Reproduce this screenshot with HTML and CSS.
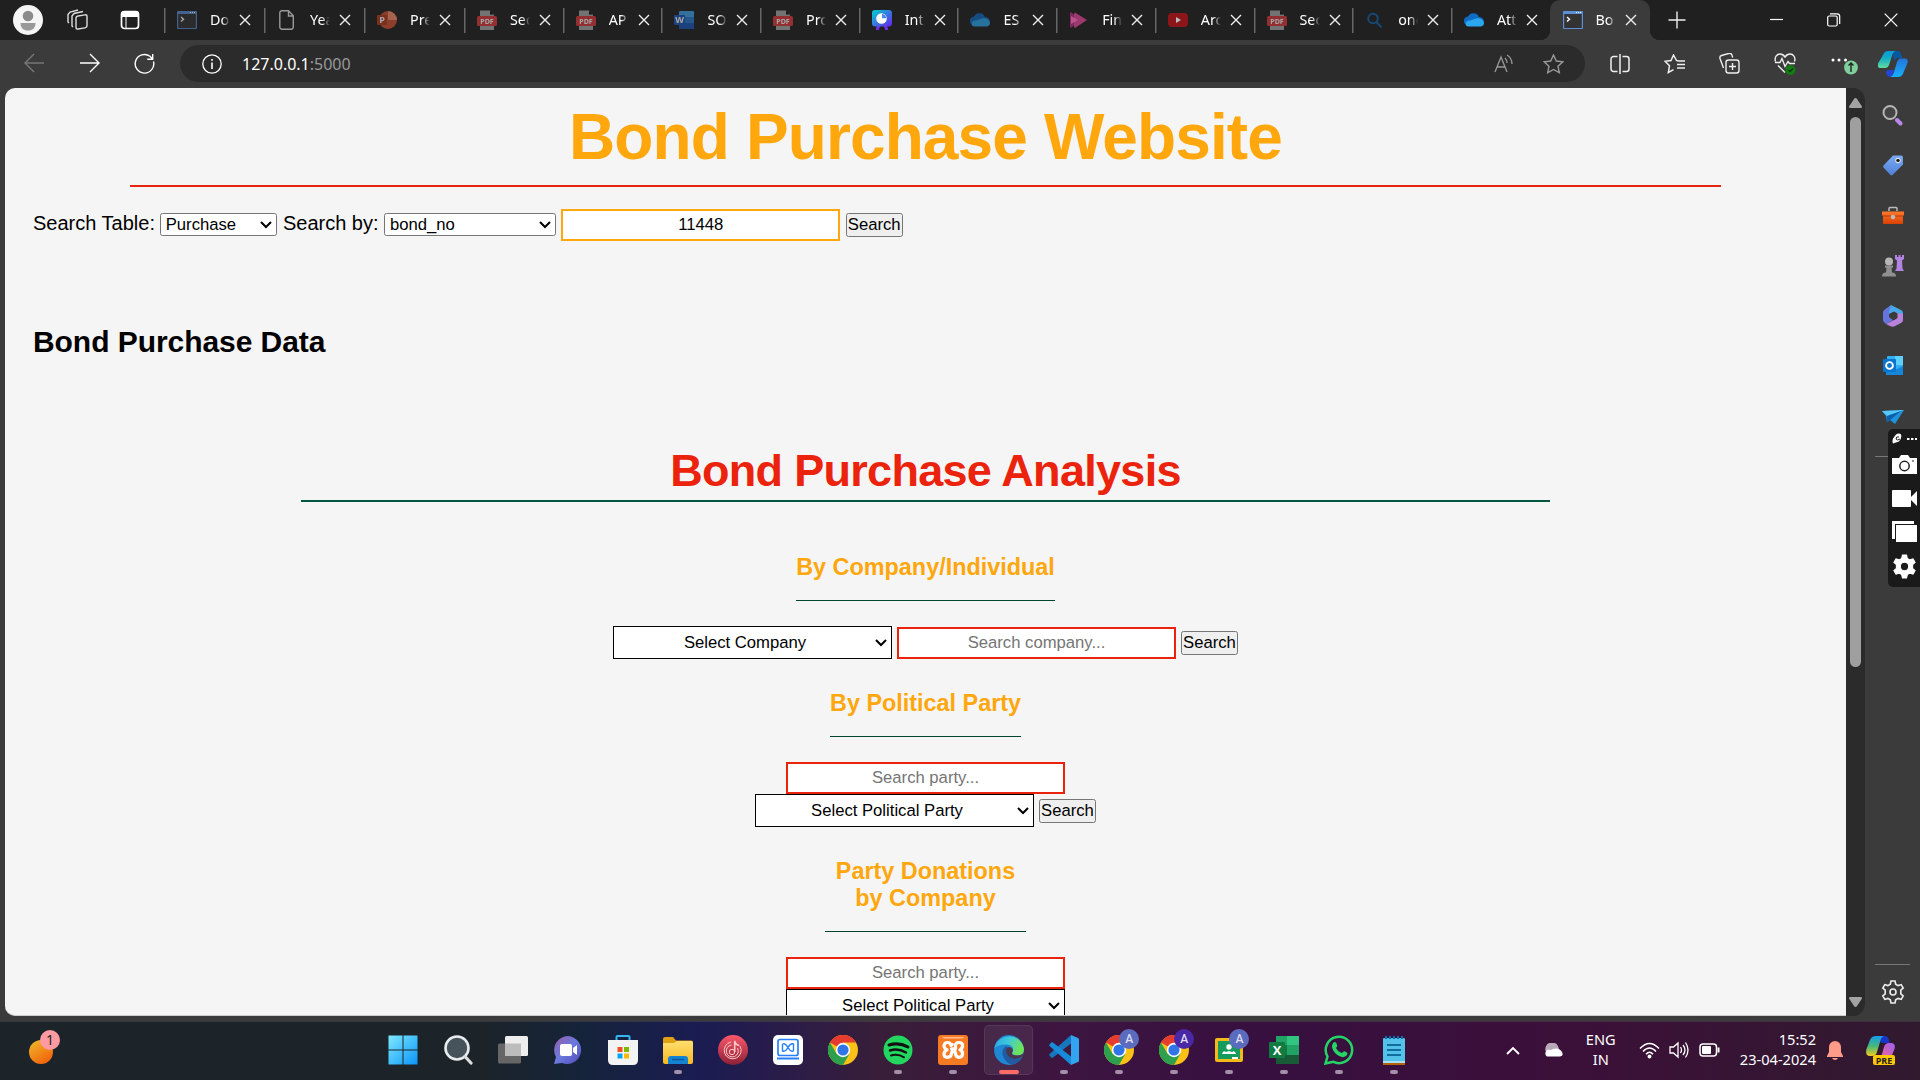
FILE: index.html
```html
<!DOCTYPE html>
<html lang="en">
<head>
<meta charset="utf-8">
<title>Bond Purchase Website</title>
<link rel="stylesheet" href="styles.css">
</head>
<body>
<svg class="defs" width="0" height="0">
  <defs>
    <linearGradient id="gWin" x1="0" y1="0" x2="1" y2="1"><stop offset="0" stop-color="#7feaff"/><stop offset="1" stop-color="#0a94f7"/></linearGradient>
    <linearGradient id="gOrange" x1="0" y1="0" x2=".6" y2="1"><stop offset="0" stop-color="#eebc2d"/><stop offset="1" stop-color="#f2650c"/></linearGradient>
    <linearGradient id="gChat" x1="0" y1="0" x2="1" y2="1"><stop offset="0" stop-color="#9a5ba8"/><stop offset=".5" stop-color="#6a7ade"/><stop offset="1" stop-color="#5046b8"/></linearGradient>
    <linearGradient id="gFolder" x1="0" y1="0" x2="0" y2="1"><stop offset="0" stop-color="#ffdf70"/><stop offset="1" stop-color="#f8b820"/></linearGradient>
    <linearGradient id="gMusic" x1="0" y1="0" x2="0" y2="1"><stop offset="0" stop-color="#fa586a"/><stop offset="1" stop-color="#8c2036"/></linearGradient>
    <linearGradient id="gEdge" x1="0" y1="0" x2="1" y2=".3"><stop offset="0" stop-color="#1a9de0"/><stop offset=".5" stop-color="#30c6d8"/><stop offset="1" stop-color="#65e14c"/></linearGradient>
    <linearGradient id="gCopA" x1="0" y1="0" x2="0" y2="1"><stop offset="0" stop-color="#0b9bd8"/><stop offset=".4" stop-color="#12aac8"/><stop offset="1" stop-color="#62dc9c"/></linearGradient>
    <linearGradient id="gCopB" x1="0" y1="0" x2="0" y2="1"><stop offset="0" stop-color="#2573dc"/><stop offset="1" stop-color="#14b0fa"/></linearGradient>
    <linearGradient id="gPreA" x1="0" y1="0" x2="0" y2="1"><stop offset="0" stop-color="#179cf0"/><stop offset=".5" stop-color="#45b878"/><stop offset="1" stop-color="#f2cc20"/></linearGradient>
    <linearGradient id="gPreB" x1="1" y1="0" x2="0" y2="1"><stop offset="0" stop-color="#9c60f0"/><stop offset="1" stop-color="#fa6590"/></linearGradient>
    <linearGradient id="gPres" x1="0" y1="0" x2="1" y2="1"><stop offset="0" stop-color="#00d3cf"/><stop offset="1" stop-color="#6b20f0"/></linearGradient>
    <linearGradient id="gTag" x1="0" y1="0" x2="0" y2="1"><stop offset="0" stop-color="#79abf2"/><stop offset="1" stop-color="#5080d8"/></linearGradient>
    <linearGradient id="gBox" x1="0" y1="0" x2="0" y2="1"><stop offset="0" stop-color="#ff7a2c"/><stop offset="1" stop-color="#d84004"/></linearGradient>
    <symbol id="close" viewBox="0 0 12 12"><path d="M1 1l10 10M11 1L1 11" stroke="#eee" stroke-width="1.4" fill="none"/></symbol>
    <symbol id="term" viewBox="0 0 20 20"><rect width="20" height="18" y="1" rx="1" fill="#5d8fd6"/><rect x="1.2" y="4" width="17.6" height="14" fill="#333"/><path d="M4 7l2.5 2.3L4 11.500" stroke="#fff" stroke-width="1.4" fill="none"/><path d="M13 2.500h1M15 2.500h1M17 2.500h1" stroke="#fff"/></symbol>
    <symbol id="pdf" viewBox="0 0 20 20"><path d="M3 .5h10l4 4V20H3z" fill="#aaa"/><path d="M13 .5l4 4h-4z" fill="#111"/><rect x="0" y="6" width="20" height="10" rx="1.500" fill="#e03a3c"/><text x="10" y="13.600" font-size="7" font-weight="700" text-anchor="middle" fill="#fff" font-family="Open Sans, sans-serif">PDF</text></symbol>
    <symbol id="cloud" viewBox="0 0 20 20"><path d="M1 14a4.500 4.500 0 0 1 3-7.500A6 6 0 0 1 15 7a4.500 4.500 0 0 1 4 7z" fill="#0f6cc4"/><path d="M2 15.500C.5 13 3 10 6 10.500l6-2c4-1 8 1.500 8 4.500a3.500 3.500 0 0 1-3 3.500H5a4 4 0 0 1-3-1z" fill="#2ba7f0"/></symbol>
    <symbol id="chrome" viewBox="0 0 30 30"><circle cx="15" cy="15" r="15" fill="#fbc116"/><path d="M15 15L2 7.500A15 15 0 0 1 28 7.500H15z" fill="#e63c30"/><path d="M2 7.500A15 15 0 0 0 15 30l6.500-11.300L15 15 8.500 18.700z" fill="#2ca04c"/><circle cx="15" cy="15" r="7.200" fill="#fff"/><circle cx="15" cy="15" r="5.600" fill="#2f75e8"/></symbol>
    <symbol id="gear" viewBox="0 0 24 24"><path d="M10 1h4l.7 3.200 2.400 1.400 3.100-1 2 3.500-2.400 2.100v3.600l2.400 2.100-2 3.500-3.100-1-2.400 1.400L14 23h-4l-.7-3.200-2.400-1.400-3.100 1-2-3.500 2.400-2.100v-3.600L1.800 8.100l2-3.500 3.100 1 2.400-1.400z"/></symbol>
  </defs>
</svg>

<div class="desktop">
  <header class="tabstrip">
    <div class="strip-tools">
      <svg class="avatar" width="30" height="30" viewBox="0 0 30 30"><circle cx="15" cy="15" r="15" fill="#f5f5f5"/><circle cx="15" cy="11" r="5.300" fill="#8b8b8b"/><path d="M7.500 18h15c0 5-3 7.500-7.500 7.500S7.500 23 7.500 18z" fill="#999"/></svg>
      <svg width="22" height="22" viewBox="0 0 22 22" fill="none" stroke="#ddd" stroke-width="1.400"><rect x="9" y="7" width="11" height="13" rx="2" transform="skewY(-10) translate(0 2)"/><path d="M6 18L5 17V7l2-2.500 9-2M2 14l-1-1V5.500L3 3l8-2"/></svg>
      <svg width="20" height="20" viewBox="0 0 20 20"><rect x="1.500" y="1.500" width="17" height="17" rx="3" fill="none" stroke="#fff" stroke-width="1.700"/><path d="M1 4a3 3 0 0 1 3-3h12a3 3 0 0 1 3 3v3H1z" fill="#fff"/><path d="M6 7v11" stroke="#fff"/></svg>
    </div>
    <nav class="tabs">
      <div class="tab wide dim"><svg><use href="#term"/></svg><span>Do</span><svg class="x"><use href="#close"/></svg></div>
      <div class="tab wide"><svg viewBox="0 0 20 20"><path d="M4.500.7h7l4.800 5V17a2.200 2.200 0 0 1-2.200 2.200H5A2.200 2.200 0 0 1 2.800 17V2.800A2 2 0 0 1 4.500.7zM11.500.7V6h4.800" fill="none" stroke="#999" stroke-width="1.400"/></svg><span>Yea</span><svg class="x"><use href="#close"/></svg></div>
      <div class="tab wide dim"><svg viewBox="0 0 20 20"><circle cx="11" cy="10" r="9" fill="#d35230"/><path d="M11 1a9 9 0 0 1 9 9h-9z" fill="#ff8f6b"/><rect y="5" width="10" height="10" rx="1" fill="#b83b1d"/><text x="5" y="13" font-size="9" font-weight="700" text-anchor="middle" fill="#fff" font-family="Open Sans">P</text></svg><span>Pre</span><svg class="x"><use href="#close"/></svg></div>
      <div class="tab dim"><svg><use href="#pdf"/></svg><span>Sec</span><svg class="x"><use href="#close"/></svg></div>
      <div class="tab dim"><svg><use href="#pdf"/></svg><span>AP</span><svg class="x"><use href="#close"/></svg></div>
      <div class="tab dim"><svg viewBox="0 0 20 20"><rect x="5" y="1" width="15" height="18" rx="1" fill="#41a5ee"/><path d="M5 7h15v12H5z" fill="#2b7cd3"/><path d="M5 13h15v6H5z" fill="#185abd"/><rect y="5" width="11" height="10" rx="1" fill="#185abd"/><text x="5.500" y="13" font-size="9" font-weight="700" text-anchor="middle" fill="#fff" font-family="Open Sans">W</text></svg><span>SO</span><svg class="x"><use href="#close"/></svg></div>
      <div class="tab dim"><svg><use href="#pdf"/></svg><span>Pro</span><svg class="x"><use href="#close"/></svg></div>
      <div class="tab"><svg viewBox="0 0 20 20"><path d="M7 15l-2 5M13 15l2 5" stroke="#7a2cf0" stroke-width="3"/><rect width="20" height="16.500" rx="3" fill="url(#gPres)"/><circle cx="9.500" cy="8.500" r="5.300" fill="#fff"/><path d="M10 8.300V4a4.300 4.300 0 0 1 4.300 4.300z" fill="#4a8af5"/></svg><span>Int</span><svg class="x"><use href="#close"/></svg></div>
      <div class="tab dim"><svg><use href="#cloud"/></svg><span>ES</span><svg class="x"><use href="#close"/></svg></div>
      <div class="tab"><svg viewBox="0 0 20 20"><path d="M2 2l9 8-9 8-1-1V3z" fill="#7f2c5b"/><path d="M6 2.500l12 7.500-12 8-1-1V4z" fill="#9c3a6e"/><path d="M2 6l7 4-7 4z" fill="#b9548a"/></svg><span>Fin</span><svg class="x"><use href="#close"/></svg></div>
      <div class="tab"><svg viewBox="0 0 20 20"><rect y="3" width="20" height="14" rx="4" fill="#8b1518"/><path d="M8 7l5 3-5 3z" fill="#bbb"/></svg><span>Arc</span><svg class="x"><use href="#close"/></svg></div>
      <div class="tab dim"><svg><use href="#pdf"/></svg><span>Sec</span><svg class="x"><use href="#close"/></svg></div>
      <div class="tab"><svg viewBox="0 0 20 20" fill="none" stroke="#164a78" stroke-width="1.900"><circle cx="8" cy="8.500" r="4.800"/><path d="M11.500 12l5 5.500"/></svg><span>one</span><svg class="x"><use href="#close"/></svg></div>
      <div class="tab last"><svg><use href="#cloud"/></svg><span>Att</span><svg class="x"><use href="#close"/></svg></div>
      <div class="tab active"><svg><use href="#term"/></svg><span>Bo</span><svg class="x"><use href="#close"/></svg></div>
    </nav>
    <svg class="newtab" width="18" height="18" viewBox="0 0 18 18"><path d="M9 .5v17M.5 9h17" stroke="#eee" stroke-width="1.400"/></svg>
    <div class="winctl">
      <svg width="14" height="14" viewBox="0 0 14 14"><path d="M0 6.500h13" stroke="#fff" stroke-width="1.200"/></svg>
      <svg width="14" height="14" viewBox="0 0 14 14" fill="none" stroke="#fff" stroke-width="1.200"><rect x=".7" y="3" width="9.500" height="10" rx="1.500"/><path d="M3 .9h7a2.700 2.700 0 0 1 2.700 2.700V11"/></svg>
      <svg width="14" height="14" viewBox="0 0 14 14"><path d="M.7.7l12.600 12.600M13.300.7L.7 13.300" stroke="#fff" stroke-width="1.200"/></svg>
    </div>
  </header>

  <div class="toolbar">
    <div class="nav">
      <svg width="21" height="20" viewBox="0 0 21 20" fill="none" stroke="#777" stroke-width="1.400"><path d="M20 10H1M10 1l-9 9 9 9"/></svg>
      <svg width="21" height="20" viewBox="0 0 21 20" fill="none" stroke="#fff" stroke-width="1.400"><path d="M1 10h19M11 1l9 9-9 9"/></svg>
      <svg width="21" height="21" viewBox="0 0 21 21" fill="none" stroke="#fff" stroke-width="1.400"><path d="M19.500 8.500A9.300 9.300 0 1 1 16 3.300L18.500 6M18.700 1v5.300h-5.500"/></svg>
    </div>
    <div class="address">
      <svg width="20" height="20" viewBox="0 0 20 20" fill="none" stroke="#fff" stroke-width="1.300"><circle cx="10" cy="10" r="9.200"/><path d="M10 8.500v6.500M10 5v1.800" stroke-width="1.600"/></svg>
      <div class="url">127.0.0.1<span>:5000</span></div>
      <svg width="20" height="19" viewBox="0 0 20 19" fill="none" stroke="#999" stroke-width="1.300"><path d="M1 18L7 3l6 15M3 13h8M11 4q2 2 2 5M13 1q5 3 5 9"/></svg>
      <svg width="21" height="20" viewBox="0 0 21 20" fill="none" stroke="#999" stroke-width="1.400"><path d="M10.500 1l2.800 6 6.500.8-4.800 4.400 1.300 6.500-5.800-3.200-5.800 3.200L6 12.200 1.200 7.800l6.500-.8z"/></svg>
    </div>
    <div class="actions">
      <svg width="20" height="20" viewBox="0 0 20 20" fill="none" stroke="#eee" stroke-width="1.500"><path d="M7.500 2.500H3.500A2.500 2.500 0 0 0 1 5v10a2.500 2.500 0 0 0 2.500 2.500h4M12.500 2.500h4A2.500 2.500 0 0 1 19 5v10a2.500 2.500 0 0 1-2.500 2.500h-4M10 0v20"/></svg>
      <svg width="21" height="20" viewBox="0 0 21 20" fill="none" stroke="#eee" stroke-width="1.500"><path d="M14 7l-1.500-.5L9.500 1 7 6.500 1 7.300l4.500 4.500L4.300 18.500l5.200-2.800M13 10.500h8M13 14h8M14 7h7"/></svg>
      <svg width="21" height="21" viewBox="0 0 21 21" fill="none" stroke="#eee" stroke-width="1.400"><rect x="7" y="7" width="13" height="13" rx="2.500"/><path d="M13.500 10v7M10 13.500h7M4.500 15L1 5.500A2.500 2.500 0 0 1 2.500 2.500l7-2A2.500 2.500 0 0 1 13 2.200l.7 2.300"/></svg>
      <svg width="22" height="22" viewBox="0 0 22 22" fill="none" stroke="#eee" stroke-width="1.400"><path d="M1.500 8.500C0 4 3 1 6 1c2.500 0 4 1.500 5 3 1-1.500 2.500-3 5-3 3 0 6 3 4.500 7.500M1 9.500h5l2-4 3 8 3-5 1.500 2H21M4 12.500l7 7"/><circle cx="16.500" cy="17" r="5" fill="#127c12" stroke="none"/><path d="M14.500 17l1.500 1.500 3-3" stroke="#053a05"/></svg>
      <svg width="28" height="24" viewBox="0 0 28 24" fill="#fff"><circle cx="3" cy="8" r="1.500"/><circle cx="9" cy="8" r="1.500"/><circle cx="15.500" cy="8" r="1.500"/><circle cx="21" cy="15.500" r="6.900" fill="#7fce9c"/><path d="M21 20v-9M18.500 13.500l2.500-2.500 2.500 2.500" stroke="#222" stroke-width="1.400" fill="none"/></svg>
      <svg width="30" height="28" viewBox="0 0 30 28"><path d="M14 1h6q2.500 0 3.500 4l.8 3h-4q-3 0-4 3z" fill="#08589e"/><path d="M9 20h7q-1 6-4 7-3-.5-4-4z" fill="#2344db"/><path d="M5 5Q6.500 1 10 1h8q-3 .5-4 5l-3 9q-1 3-4 3H2q-3-.5-2-4.500z" fill="url(#gCopA)"/><path d="M25.500 22.500Q24 27 20 27h-8q3-1 4-5l3-10q1-3.500 4-3.500h4.500q3 .5 2 4.500z" fill="url(#gCopB)"/></svg>
    </div>
  </div>

  <div class="browser-body">
    <main class="page">
      <h1 class="site-title">Bond Purchase Website</h1>
      <form class="search-row top-search">
        <label>Search Table:</label>
        <select class="ctl plain table-select"><option>Purchase</option></select>
        <label>Search by:</label>
        <select class="ctl plain by-select"><option>bond_no</option></select>
        <input class="ctl field orange" value="11448">
        <button class="ctl btn" type="button">Search</button>
      </form>
      <h2 class="data-title">Bond Purchase Data</h2>
      <h2 class="analysis-title">Bond Purchase Analysis</h2>

      <h3 class="section-title company-title">By Company/Individual</h3>
      <form class="search-row">
        <select class="ctl picker"><option>Select Company</option></select>
        <input class="ctl field" placeholder="Search company...">
        <button class="ctl btn" type="button">Search</button>
      </form>

      <h3 class="section-title party-title">By Political Party</h3>
      <form class="search-stack">
        <input class="ctl field" placeholder="Search party...">
        <div class="search-row">
          <select class="ctl picker"><option>Select Political Party</option></select>
          <button class="ctl btn" type="button">Search</button>
        </div>
      </form>

      <h3 class="section-title donations-title">Party Donations<br>by Company</h3>
      <form class="search-stack">
        <input class="ctl field" placeholder="Search party...">
        <select class="ctl picker"><option>Select Political Party</option></select>
      </form>
    </main>
    <div class="scrollbar">
      <svg width="13" height="10" viewBox="0 0 13 10"><path d="M6.500 0Q7.500 0 8 1l5 7.500-.5 1.500H.5L0 8.500 5 1q.5-1 1.500-1z" fill="#a3a3a3"/></svg>
      <div class="thumb"></div>
      <svg width="13" height="10" viewBox="0 0 13 10"><path d="M6.500 10Q5.500 10 5 9L0 1.500.5 0h12l.5 1.500L8 9q-.5 1-1.500 1z" fill="#a3a3a3"/></svg>
    </div>
    <aside class="sidebar">
      <div class="side-icons">
        <svg viewBox="0 0 22 22"><circle cx="8" cy="8.500" r="6.500" fill="#444" stroke="#b5b5b5" stroke-width="2"/><path d="M15 16l3.500 3.500" stroke="#bb86ea" stroke-width="4" stroke-linecap="round"/></svg>
        <svg viewBox="0 0 22 22"><path d="M11 1.500h8q2 0 2 2v7L10.500 21q-1 .8-2 0L1.500 13.500q-.8-1 0-2z" fill="url(#gTag)"/><circle cx="16" cy="6.500" r="2.300" fill="#222" stroke="#fff"/></svg>
        <svg viewBox="0 0 22 22"><path d="M7 6V3.500q0-1 1-1h6q1 0 1 1V6" fill="none" stroke="#bbb" stroke-width="1.500"/><path d="M0 6.500h22V10l-1 1v8H1v-8l-1-1z" fill="url(#gBox)"/><path d="M1 11h20" stroke="#b73804"/><circle cx="11" cy="12" r="2.300" fill="#bbb"/></svg>
        <svg viewBox="0 0 22 22"><path d="M13 0h2v2h1.500V0h2v2H20V0h2v4l-2 1.500.5 8 1.500 2.500h-9l1.500-2.500.5-8L13 4z" fill="#b283e2"/><path d="M3 10.500h8v2l-1.500.5.5 4.500q4 0 4 4H0q0-4 4-4l.5-4.500L3 12.500z" fill="#8f8f8f"/><circle cx="7" cy="6.500" r="4" fill="#b5b5b5"/></svg>
        <svg viewBox="0 0 22 22"><path d="M9 0l10 5q2 1 2 3v4L12 7 7 9 4 4z" fill="#48a8e8"/><path d="M11 .5L5 3Q1 5 1 8v7q0 2 3 4l7-4-4-3V7q0-4 4-6.500z" fill="#6674dd"/><path d="M21 9v6q0 2-2 3l-7 3.500q-2 .5-4-.5l-4-2 10-5 1-6z" fill="#b982dc"/><path d="M8 8.500l4-2 3.500 2v4.500L12 15l-4-2z" fill="#3b3b3b"/></svg>
        <svg viewBox="0 0 22 22"><rect x="5" y="1" width="16" height="19" rx="1" fill="#32aef2"/><path d="M13 1h8v9h-8z" fill="#5ed0ff"/><path d="M4 11l9 4 8-4v9H4z" fill="#1686d9"/><rect x="1" y="4" width="13" height="13" rx="1" fill="#0875d0"/><circle cx="7.500" cy="10.500" r="3.400" fill="none" stroke="#fff" stroke-width="1.900"/></svg>
        <svg viewBox="0 0 22 22"><path d="M0 5l22-1-9 14-5-4-3 2.500L4 10z" fill="#1d92dd"/><path d="M0 5l22-1L5 10z" fill="#56c8fb"/><path d="M5 16.500V10L19 5 8 14z" fill="#0b5fa8"/></svg>
      </div>
      <div class="side-rule upper"></div>
      <div class="side-foot"><div class="side-rule"></div>
        <svg width="24" height="24" viewBox="0 0 24 24" fill="none" stroke="#eee" stroke-width="1.600"><use href="#gear"/><circle cx="12" cy="12" r="3"/></svg>
      </div>
    </aside>
  </div>

  <footer class="taskbar">
    <svg class="weather" width="40" height="44" viewBox="0 0 40 44"><ellipse cx="14" cy="26" rx="12" ry="12" fill="url(#gOrange)"/><circle cx="23" cy="14" r="10" fill="#ff9aa2"/><text x="23" y="19" font-size="14" text-anchor="middle" fill="#222" font-family="Noto Sans, sans-serif">1</text></svg>
    <div class="apps">
      <div class="app"><svg viewBox="0 0 30 30"><path d="M.5.5h14v14H.5zM15.500.5h14v14h-14zM.5 15.500h14v14H.5zM15.500 15.500h14v14h-14z" fill="url(#gWin)"/></svg></div>
      <div class="app"><svg viewBox="0 0 30 30"><circle cx="14" cy="13" r="11.500" fill="#46535b" stroke="#e9ebed" stroke-width="2.600"/><path d="M22 21.500l6 6.500" stroke="#ddd" stroke-width="3.200" stroke-linecap="round"/></svg></div>
      <div class="app"><svg viewBox="0 0 30 30"><rect x="0" y="8.500" width="23" height="20" rx="1.500" fill="#666"/><rect x="7" y="1" width="23" height="20" rx="1.500" fill="#eee"/><path d="M7 8.500h16V21H7z" fill="#bcbcbc"/></svg></div>
      <div class="app"><svg viewBox="0 0 30 30"><path d="M15 1a14 14 0 1 1-6 27l-8 1 2-7A14 14 0 0 1 15 1z" fill="url(#gChat)"/><rect x="7" y="9" width="12" height="12" rx="2" fill="#fff"/><path d="M20 13l4-3v10l-4-3z" fill="#fff"/></svg></div>
      <div class="app"><svg viewBox="0 0 30 30"><path d="M8.500 7V2q0-1 1-1h11q1 0 1 1v5" fill="none" stroke="#35b7ed" stroke-width="2"/><path d="M0 5h30v20q0 5-5 5H5q-5 0-5-5z" fill="#f3f3f3"/><path d="M9.500 12h5v5h-5z" fill="#f25022"/><path d="M16 12h5v5h-5z" fill="#7fba00"/><path d="M9.500 18.500h5v5h-5z" fill="#00a4ef"/><path d="M16 18.500h5v5h-5z" fill="#ffb900"/></svg></div>
      <div class="app open"><svg viewBox="0 0 30 30"><path d="M0 4q0-2 2-2h8l3 3.500h15q2 0 2 2V13H0z" fill="#e0a013"/><path d="M0 8h11l3-2h14q2 0 2 2v19q0 2-2 2H2q-2 0-2-2z" fill="url(#gFolder)"/><path d="M5 29v-5q0-3 3-3h14q3 0 3 3v5z" fill="#1583d1"/><path d="M9 24.500h12" stroke="#0b599c" stroke-width="1.500"/></svg></div>
      <div class="app"><svg viewBox="0 0 30 30"><circle cx="15" cy="15" r="15" fill="url(#gMusic)"/><g fill="none" stroke="#ffc9c9" stroke-width="1"><path d="M22 11a8.500 8.500 0 1 1-9-4"/><path d="M19.500 13a6 6 0 1 1-6-3"/><circle cx="14" cy="17" r="2.700"/><path d="M16.700 17V6q1 4 4.500 4.500" stroke-width="1.600"/></g></svg></div>
      <div class="app"><svg viewBox="0 0 30 30"><rect width="30" height="30" rx="5" fill="#fff"/><rect x="5" y="4.500" width="20" height="16" rx="2" fill="none" stroke="#267fff" stroke-width="1.700"/><path d="M9.500 16V10q0-1.500 1.500-1.300 2 .3 4 3.800t4 3.800q1.500.2 1.500-1.300V9q-3-1-5.500 3.500T9.500 16z" fill="none" stroke="#267fff" stroke-width="1.400"/><path d="M4 23.500h22" stroke="#267fff" stroke-width="2"/></svg></div>
      <div class="app"><svg><use href="#chrome"/></svg></div>
      <div class="app open"><svg viewBox="0 0 30 30"><circle cx="15" cy="15" r="14.500" fill="#22d660"/><g fill="none" stroke="#111" stroke-linecap="round"><path d="M6 10q10-3 19 2" stroke-width="3"/><path d="M7 15.500q8-2.500 16 2" stroke-width="2.500"/><path d="M8 20.500q7-2 13 1.800" stroke-width="2"/></g></svg></div>
      <div class="app open"><svg viewBox="0 0 30 30"><rect width="30" height="30" rx="3" fill="#f77b23"/><path d="M4 2h22q-1 1.500-3 1.500H7Q5 3.500 4 2z" fill="#ffbd91"/><path d="M13 10.500Q12.500 7.500 9.500 7.500T6 10.500q0 3 3 4.300-3 1.500-3 4.500t3.500 3 4-3.500l.5-2.500h3l.5 2.500q.5 3.500 3.500 3.500t3.500-3-2.500-4.500q2.500-1.300 2.500-4.300t-3.500-3-3.500 3v3.300h-4" fill="none" stroke="#fff" stroke-width="3.200" stroke-linejoin="round" stroke-linecap="round"/><circle cx="14" cy="9.500" r="1.800" fill="#fff"/></svg></div>
      <div class="app open current"><svg viewBox="0 0 30 30"><circle cx="15" cy="15" r="14.900" fill="#0f7fd2"/><path d="M.5 13A15 15 0 0 1 30 14q0 6.500-7 6.500c-4 0-6-1.500-4.500-3.500 2-4-1-7.500-6-7.500Q5 9 .5 13z" fill="url(#gEdge)"/><path d="M12 11q-5 4-3 10 2.500 7 9 8.700 7-1.200 10-7.200-6 3-11 .5c-4-2-6-7-3-11z" fill="#114f9e"/><path d="M14.500 12q-3.500 1.500-2 6 2.500 6 9.500 6 4 0 7-3 1.500-1.500 1-.8L30 18q-2.500 2.500-7 2.500c-4 0-6-1.500-4.500-3.500 1.200-3-1-5-4-5z" fill="#3d2740"/></svg></div>
      <div class="app open"><svg viewBox="0 0 30 30"><path d="M22 8.500v13L13.500 15z" fill="#3d1a40"/><path d="M0 19.500L22 0v8.500L4 22.500q-1 .7-2 0z" fill="#1677bf"/><path d="M0 10.500L22 30v-8.500L4 7.500q-1-.7-2 0z" fill="#168bd8"/><path d="M22 0l7 3q1 .5 1 1.500v21q0 1-1 1.500l-7 3z" fill="#33a4ef"/></svg></div>
      <div class="app open"><svg><use href="#chrome"/></svg><i class="badge">A</i></div>
      <div class="app open"><svg><use href="#chrome"/></svg><i class="badge purple">A</i></div>
      <div class="app open"><svg viewBox="0 0 30 30"><rect x="1" y="3" width="28" height="24" rx="2" fill="#f3ba19"/><rect x="4" y="6" width="22" height="18" fill="#159b5b"/><circle cx="15" cy="12" r="2.700" fill="#fff"/><path d="M8 19q1-4 4-2l3-1 3 1q3-2 4 2z" fill="#fff"/><path d="M18 24h6v-2h-6z" fill="#fff"/></svg><i class="badge">A</i></div>
      <div class="app open"><svg viewBox="0 0 30 30"><path d="M7 1h23v28H7z" fill="#21a366"/><path d="M18 1h12v9H18z" fill="#33c481"/><path d="M7 20h23v9H7z" fill="#185c37"/><path d="M7 10h11v10H7z" fill="#107c41"/><rect y="7" width="16" height="16" rx="1" fill="#107c41"/><text x="8" y="19.500" font-size="13" font-weight="700" text-anchor="middle" fill="#fff" font-family="Open Sans">X</text></svg></div>
      <div class="app open"><svg viewBox="0 0 30 30"><path d="M1.500 28.500l2-7A13.200 13.200 0 1 1 9 26.700z" fill="none" stroke="#25d366" stroke-width="2.500"/><path d="M9 8q3-3 4 2 1 1-1 3 2 4 6 5 2-3 4-1 3 1 0 4-4 3-10-2-6-6-3-11z" fill="#25d366"/></svg></div>
      <div class="app open"><svg viewBox="0 0 30 30"><rect x="4" y="3" width="22" height="26" rx="1" fill="#52c2e8"/><path d="M4 26.500h22v1H4z" fill="#fff"/><path d="M4 28h22v2H4z" fill="#b4620d"/><path d="M7 1v3M11 1v3M15 1v3M19 1v3M23 1v3" stroke="#0d6eae" stroke-width="2"/><path d="M8 10h14M8 15h14M8 20h14" stroke="#126c9c" stroke-width="1.800"/></svg></div>
    </div>
    <div class="tray">
      <svg width="14" height="9" viewBox="0 0 14 9"><path d="M1 8l6-6 6 6" fill="none" stroke="#fff" stroke-width="1.900"/></svg>
      <svg class="onedrive" width="20" height="14" viewBox="0 0 20 14"><path d="M3 9a6 6 0 0 1 12-6l2 6z" fill="#b8a9b8"/><path d="M4 13.500a4 4 0 0 1 1-7q3 1 5-.5 6-2 9 3 2 4-2 4.500z" fill="#fff"/></svg>
      <div class="lang">ENG<br>IN</div>
      <svg width="21" height="17" viewBox="0 0 21 17" fill="none" stroke="#fff" stroke-width="1.400"><path d="M1 6.500q9.500-10 19 0M4 9.500q6.500-7 13 0M7 12.300q3.500-4 7 0"/><circle cx="10.500" cy="14.500" r="1.300" fill="#fff"/></svg>
      <svg class="speaker" width="20" height="18" viewBox="0 0 20 18" fill="none" stroke="#fff" stroke-width="1.300"><path d="M1 6h3.500L9 2v14l-4.500-4H1zM11.500 6q2 3 0 6M14 4q4 5 0 10M16.500 1.500q5 7.500 0 15"/></svg>
      <svg class="battery" width="21" height="14" viewBox="0 0 21 14"><rect x="1" y="1" width="16.500" height="12" rx="3" fill="none" stroke="#fff" stroke-width="1.500"/><rect x="3" y="3" width="9" height="8" rx="1" fill="#fff"/><path d="M19.500 4.500v5" stroke="#fff" stroke-width="2"/></svg>
      <div class="clock">15:52<br>23-04-2024</div>
      <svg class="bell" width="16" height="19" viewBox="0 0 16 19"><path d="M8 0a6 6 0 0 1 6 6v5l2 4v1H0v-1l2-4V6a6 6 0 0 1 6-6zM5 17h6q-1 2-3 2t-3-2z" fill="#ff9b88"/></svg>
      <svg class="pre" width="30" height="30" viewBox="0 0 30 30"><path d="M10 1h9q4 0 4.500 7h-8z" fill="#1736c8"/><path d="M4 5Q5.500 1 10 1h8q-3 1-4 6l-3 10q-1 4-5 4H3q-4-1-2.500-7z" fill="url(#gPreA)"/><path d="M26 20q-1 4-6 4h-8q3-1 4-5l2-7q1-4 5-4h3q4 1 2.500 6z" fill="url(#gPreB)"/><rect x="7" y="20" width="22" height="10" rx="2" fill="#ffc800"/><text x="18" y="28.500" font-size="9" font-weight="700" text-anchor="middle" fill="#222" font-family="Open Sans">PRE</text></svg>
    </div>
  </footer>

  <div class="recorder">
    <svg width="26" height="12" viewBox="0 0 26 12"><path d="M5 1.500q3-2 5 0 1 4-2 7l-6 2q-1-2 0-5z" fill="#fff"/><path d="M8 4q-3-1-3 2 1 2 4 0" stroke="#222" fill="none"/><path d="M16 6h2.500M20 6h2.500M24 6h2" stroke="#fff" stroke-width="2"/></svg>
    <svg class="camera" width="25" height="19" viewBox="0 0 25 19"><path d="M0 3h7l2-3h7l2 3h7v16H0z" fill="#fff"/><circle cx="12.500" cy="11" r="4.700" fill="#fff" stroke="#222" stroke-width="1.500"/><path d="M20 6h2" stroke="#222"/></svg>
    <svg class="video" width="25" height="17" viewBox="0 0 25 17"><rect width="19" height="17" rx="1" fill="#fff"/><path d="M19 7l6-6v15l-6-6z" fill="#fff"/></svg>
    <svg class="gallery" width="25" height="21" viewBox="0 0 25 21"><path d="M0 0h22v3H3v15H0z" fill="#fff"/><path d="M4 4h21v17H4z" fill="#fff"/></svg>
    <svg class="settings" width="25" height="25" viewBox="0 0 24 24" fill="#fff" stroke="#fff"><use href="#gear"/><circle cx="12" cy="12" r="4" fill="#1a1a1a"/></svg>
  </div>
</div>
</body>
</html>
```

FILE: styles.css
```css
* { box-sizing: border-box; }
body { margin: 0; background: #3b3b3b; overflow: hidden; }
.defs { position: absolute; }
svg { display: block; flex: none; }

.desktop {
  position: relative;
  width: 1920px;
  height: 1080px;
  display: grid;
  grid-template-rows: 40px 48px 933px 59px;
  font-family: "Noto Sans", "Open Sans", sans-serif;
  color: #fff;
}

/* Tab strip */
.tabstrip { display: flex; align-items: center; background: #202020; }
.strip-tools { width: 164px; padding-left: 13px; display: flex; align-items: center; gap: 24px; }
.strip-tools svg:last-child { margin-left: 7px; }
.tabs { display: flex; align-self: stretch; }
.tab {
  width: 98.7px;
  display: flex;
  align-items: center;
  padding-left: 13px;
  background: linear-gradient(#666, #666) left center / 1.5px 25px no-repeat;
}
.tab.wide { width: 100px; }
.tab svg { width: 20px; height: 20px; }
.tab.dim svg:first-child { opacity: .6; }
.tab span {
  width: 20px;
  margin: -1px 0 0 13px;
  overflow: hidden;
  white-space: nowrap;
  font-size: 14.3px;
  line-height: 20px;
  -webkit-mask-image: linear-gradient(90deg, #000 60%, transparent);
}
.tab svg.x { width: 12px; height: 12px; margin-left: 9px; }
.tab.active { position: relative; background: #3b3b3b; border-radius: 10px 10px 0 0; width: 100px; padding-left: 13px; }
.tab.active::before, .tab.active::after {
  content: ""; position: absolute; bottom: 0; width: 10px; height: 10px;
}
.tab.active::before { left: -10px; background: radial-gradient(circle at 0 0, #202020 10px, #3b3b3b 10.5px); }
.tab.active::after { right: -10px; background: radial-gradient(circle at 100% 0, #202020 10px, #3b3b3b 10.5px); }
.newtab { margin-left: 18px; }
.winctl { margin-left: auto; padding-right: 22px; display: flex; gap: 43px; }

/* Toolbar */
.toolbar { display: flex; align-items: center; background: #3b3b3b; padding-bottom: 1px; }
.nav { display: flex; width: 180px; padding-left: 24px; gap: 34px; }
.address {
  width: 1405px; height: 37px; border-radius: 19px; background: #2b2b2b;
  display: flex; align-items: center; padding: 0 21px 0 22px;
}
.url { flex: 1; margin-left: 20px; font-size: 16px; }
.url span { color: #999; }
.address svg:nth-of-type(2) { margin-right: 29px; }
.actions { display: flex; align-items: center; padding-left: 24.5px; gap: 34px; }
.actions svg:last-child { margin-left: -14px; }

/* Page frame */
.browser-body { display: flex; background: #3b3b3b; padding: 0 0 5px 5px; }
.page {
  width: 1841px; height: 928px; overflow: hidden;
  display: flex; flex-direction: column;
  background: #f5f5f5; color: #000;
  border-radius: 10px 0 0 10px;
  border-bottom: 1px solid #ccc;
  font-family: "Liberation Sans", Arial, sans-serif;
  font-size: 20px;
}
.page > * { flex: none; }
.site-title {
  margin: 12px auto 0; width: 1591px; height: 87px;
  border-bottom: 2px solid #e62510;
  color: #ffa70d; font-size: 64px; line-height: 74px; letter-spacing: -.88px; text-align: center;
}
.search-row { display: flex; align-items: center; justify-content: center; gap: 5px; }
.top-search { justify-content: flex-start; height: 32px; margin: 22px 0 0 28px; gap: 5.400px; }
.top-search label { line-height: 28px; padding-bottom: 4px; }
.top-search label:first-child { margin-right: -.6px; }
.top-search label:nth-of-type(2) { margin-left: .8px; }
.top-search .plain { margin-top: -.8px; }
.data-title { margin: 84px 0 0 28px; font-size: 30px; line-height: 34px; letter-spacing: -.06px; }
.analysis-title {
  margin: 85px auto 0; width: 1249px; height: 58px;
  border-bottom: 2px solid #00563f;
  color: #eb230c; font-size: 45px; line-height: 54px; letter-spacing: -.7px; text-align: center;
}
.section-title {
  margin: 0 auto; padding-top: 1px; color: #ffa70d; font-size: 23.400px; line-height: 27px; white-space: nowrap;
  text-align: center; border-bottom: 1px solid #00432f;
}
.company-title { width: 259px; height: 48px; margin-top: 51px; margin-bottom: 25px; }
.party-title { width: 191px; height: 48px; margin-top: 30px; margin-bottom: 25px; }
.donations-title { width: 201px; height: 75px; margin-top: 30px; margin-bottom: 25px; }
.search-stack { display: flex; flex-direction: column; align-items: center; }

/* Form controls are laid out at the page's 125% zoom level */
.ctl { zoom: 1.25; margin: 0; font-family: "Liberation Sans", Arial, sans-serif; font-size: 13.333px; flex: none; }
.plain { height: 18.4px; border: 1px solid #767676; border-radius: 2px; background: #fff; color: #000; }
.table-select { width: 93.6px; }
.by-select { width: 137.6px; }
.field { width: 223.2px; height: 25.6px; border: 2px solid #eb230c; text-align: center; background: #fff; color: #000; padding: 1px 2px; }
.field.orange { border-color: #ffa70d; }
.field::placeholder { color: #757575; }
.picker { width: 223.2px; height: 26.4px; border: 1px solid #000; border-radius: 0; text-align: center; background: #fff; color: #000; }
.btn { width: 45.6px; height: 19.2px; padding: 0; border: 1px solid #767676; border-radius: 2px; background: #efefef; color: #000; }

.scrollbar {
  width: 19px; height: 928px; background: #2b2b2b; border-radius: 0 12px 12px 0;
  display: flex; flex-direction: column; align-items: center; padding: 10px 1px 9px 0;
}
.thumb { width: 11px; height: 550px; margin: 9px 0 auto; border-radius: 6px; background: #9f9f9f; }

/* Sidebar */
.sidebar { width: 55px; display: flex; flex-direction: column; align-items: center; padding-top: 16px; }
.side-icons { display: flex; flex-direction: column; gap: 28.3px; }
.side-icons svg { width: 22px; height: 22px; }
.side-rule { width: 35px; height: 1px; background: #777; }
.side-rule.upper { margin-top: 28px; }
.side-foot { margin-top: auto; display: flex; flex-direction: column; align-items: center; gap: 15px; padding-bottom: 12px; }

.recorder {
  position: absolute; left: 1888px; top: 429px; width: 32px; height: 158px;
  background: #1a1a1a; border-radius: 5px 0 0 5px;
  display: flex; flex-direction: column; align-items: center; padding-top: 4px;
}
.camera { margin-top: 10px; }
.video { margin-top: 16px; }
.gallery { margin-top: 14px; }
.settings { margin-top: 12px; }

/* Taskbar */
.taskbar {
  display: flex; align-items: center; border-top: 1px solid #50485088; padding-bottom: 2px;
  background: linear-gradient(90deg, #1c2429 0, #1c2429 480px, #15233a 580px, #1a1c52 700px, #2b1c48 790px, #381e38 880px, #3d1540 1060px, #371040 1240px, #3b1038 1600px, #301a2e 1920px);
}
.weather { margin: -4px 0 0 27px; }
.apps { display: flex; margin-left: 308px; }
.app { position: relative; width: 55.1px; height: 50px; display: flex; align-items: center; justify-content: center; }
.app svg { width: 30px; height: 30px; }
.app.open::after {
  content: ""; position: absolute; left: 50%; bottom: 1px; width: 8px; height: 4px; margin-left: -4px;
  border-radius: 2px; background: #a58fa8;
}
.app.current::before { content: ""; position: absolute; inset: 0 3px; border-radius: 5px; background: #ffffff12; border: 1px solid #ffffff14; }
.app.current::after { width: 20px; margin-left: -10px; background: #ff6b66; }
.badge {
  position: absolute; left: 28px; top: 4px; width: 20px; height: 20px; border-radius: 50%;
  background: #5b6bbd; color: #dde; font: 500 12px/20px Roboto, sans-serif; text-align: center;
}
.badge.purple { background: #4a27a5; }
.tray { flex: 1; display: flex; align-items: center; font-size: 14.6px; line-height: 20px; padding-left: 84px; }
.onedrive { margin-left: 23px; }
.lang { width: 40px; margin: -2px 18px 0 18px; text-align: center; line-height: 20.5px; }
.speaker { margin-left: 9px; }
.battery { margin-left: 10px; }
.clock { margin: -3px 0 0 auto; text-align: right; white-space: nowrap; }
.bell { margin-left: 11px; }
.pre { margin: 0 24px 0 23px; }
```
